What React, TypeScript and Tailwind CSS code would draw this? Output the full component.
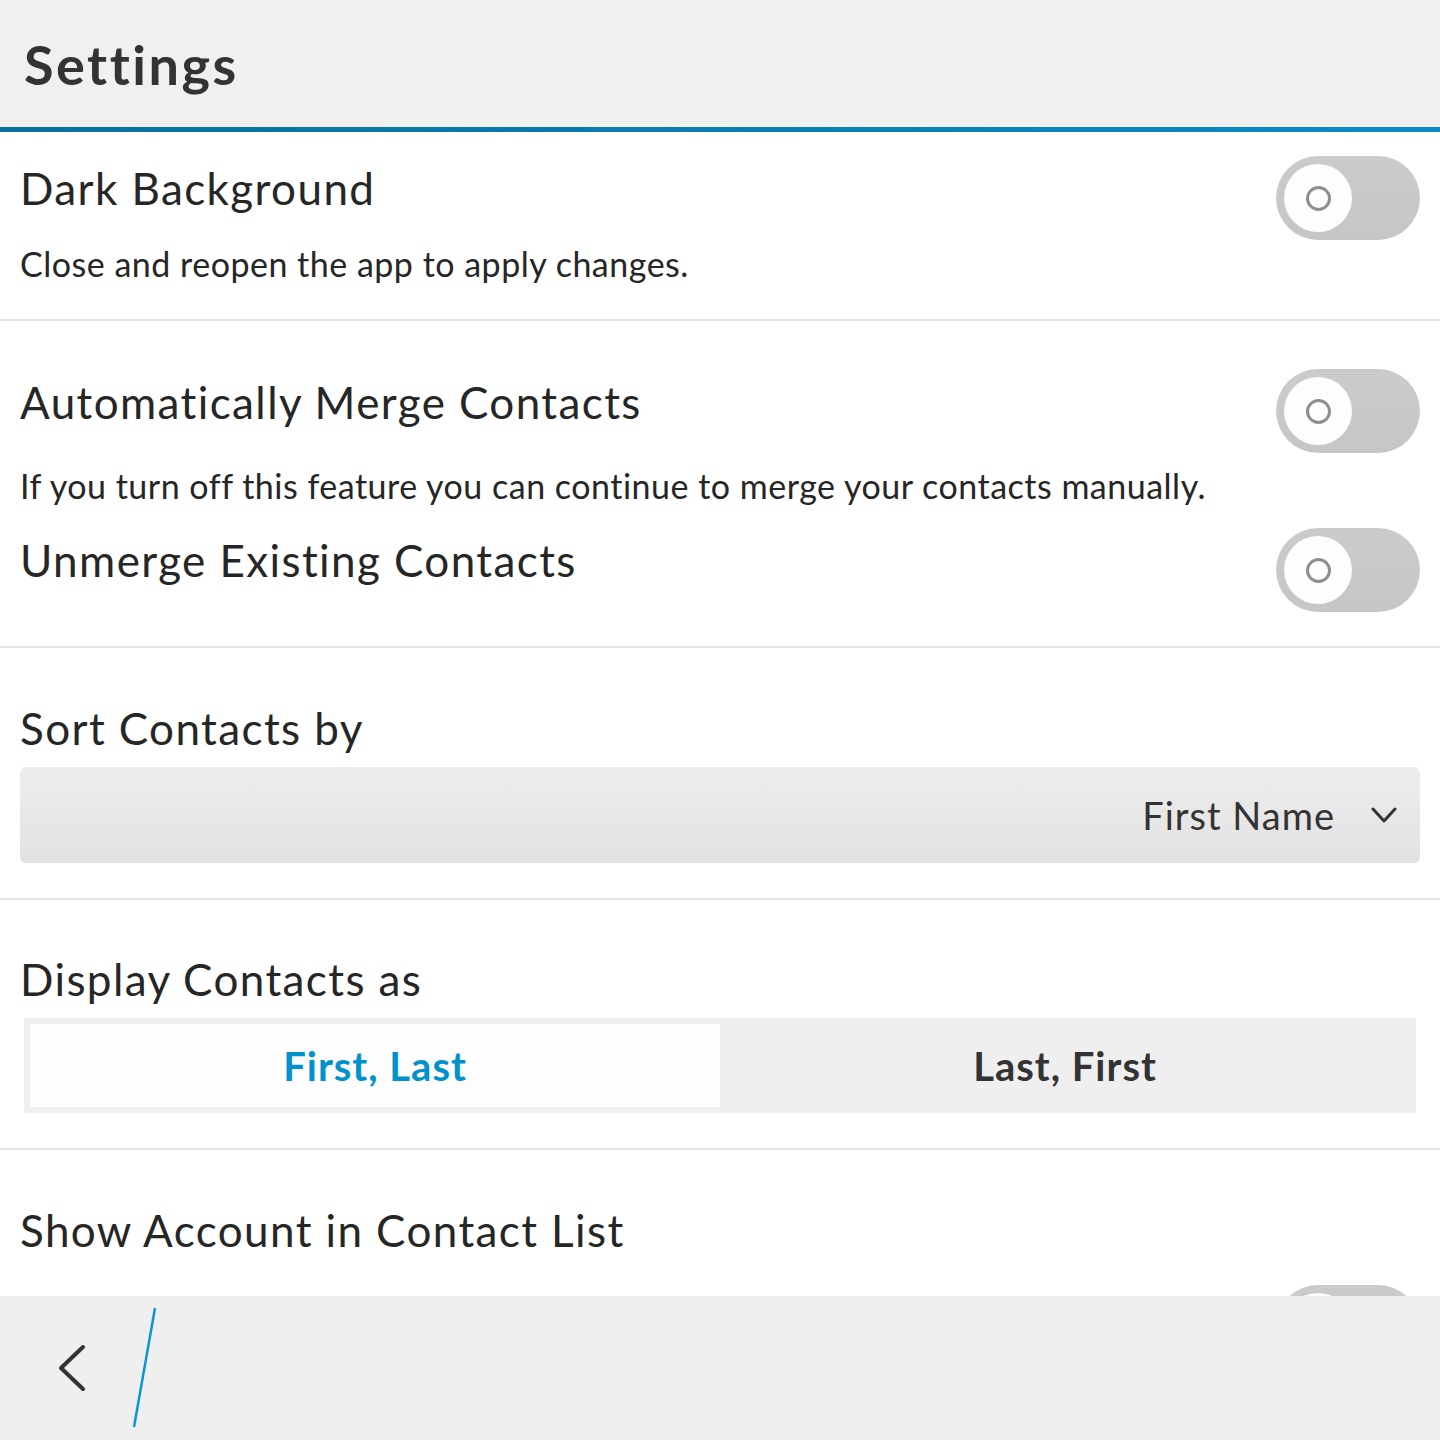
import React from 'react';

const Toggle = () => (
  <div className="w-[144px] h-[84px] shrink-0 rounded-full bg-gradient-to-b from-[#cbcbcb] to-[#c6c6c6] p-[8px] flex">
    <div className="w-[68px] h-[68px] rounded-full bg-[#fdfdfd] flex items-center justify-center">
      <div className="w-[25px] h-[25px] rounded-full border-[3px] border-[#8e8e8e]" />
    </div>
  </div>
);

const Title = ({ children, className = '' }: { children: React.ReactNode; className?: string }) => (
  <div className={`text-[44px] leading-[52px] tracking-[1.4px] text-[#262626] ${className}`}>{children}</div>
);

const Hint = ({ children, className = '' }: { children: React.ReactNode; className?: string }) => (
  <div className={`text-[34px] leading-[40px] tracking-[0.5px] text-[#262626] ${className}`}>{children}</div>
);

export default function App() {
  return (
    <div className="h-[1440px] flex flex-col bg-white overflow-hidden font-['Lato','Noto_Sans',sans-serif]">
      <header className="h-[127px] shrink-0 bg-[#f0f0f0] px-[24px] pt-[33px]">
        <h1 className="text-[54px] leading-[64px] font-bold tracking-[2.5px] text-[#333333]">Settings</h1>
      </header>
      <div className="h-[5px] shrink-0 bg-gradient-to-r from-[#07709d] to-[#0a8bc8]" />

      <main className="flex-1 overflow-hidden">
        {/* Dark background */}
        <section className="px-[20px] pt-[24px] pb-[35px] border-b-2 border-[#e4e4e4]">
          <div className="flex items-start justify-between">
            <div>
              <Title className="mt-[6px]">Dark Background</Title>
              <Hint className="mt-[30px]">Close and reopen the app to apply changes.</Hint>
            </div>
            <Toggle />
          </div>
        </section>

        {/* Merge */}
        <section className="px-[20px] pt-[48px] pb-[34px] border-b-2 border-[#e4e4e4]">
          <div className="flex items-start justify-between">
            <Title className="mt-[7px]">Automatically Merge Contacts</Title>
            <Toggle />
          </div>
          <Hint className="mt-[13px]">
            If you turn off this feature you can continue to merge your contacts manually.
          </Hint>
          <div className="mt-[22px] flex items-start justify-between">
            <Title className="mt-[6px]">Unmerge Existing Contacts</Title>
            <Toggle />
          </div>
        </section>

        {/* Sort */}
        <section className="px-[20px] pt-[54px] pb-[35px] border-b-2 border-[#e4e4e4]">
          <Title>Sort Contacts by</Title>
          <button className="mt-[13px] w-full h-[96px] rounded-[6px] bg-gradient-to-b from-[#ededed] to-[#e2e2e2] flex items-center justify-end pr-[23px]">
            <span className="text-[38px] tracking-[1px] text-[#333333]">First Name</span>
            <svg className="ml-[36px]" width="26" height="19" viewBox="0 0 26 19" fill="none">
              <polyline points="2,3 13,15 24,3" stroke="#333333" strokeWidth="3" strokeLinecap="round" strokeLinejoin="round" />
            </svg>
          </button>
        </section>

        {/* Display */}
        <section className="px-[20px] pt-[53px] pb-[35px] border-b-2 border-[#e4e4e4]">
          <Title>Display Contacts as</Title>
          <div className="mt-[13px] mx-[4px] h-[95px] bg-[#efefef] p-[6px] flex">
            <div className="flex-1 bg-[#fdfdfd] flex items-center justify-center text-[40px] font-bold tracking-[1px] text-[#0092cc]">
              First, Last
            </div>
            <div className="flex-1 flex items-center justify-center text-[40px] font-bold tracking-[1px] text-[#333333]">
              Last, First
            </div>
          </div>
        </section>

        {/* Accounts */}
        <section className="px-[20px] pt-[54px]">
          <Title>Show Account in Contact List</Title>
          <div className="mt-[29px] flex items-start justify-between">
            <div className="ml-[92px] mt-[2px] text-[38px] leading-[44px] text-[#777777]">BBM Groups</div>
            <Toggle />
          </div>
        </section>
      </main>

      <footer className="h-[144px] shrink-0 bg-[#efefef] flex items-start">
        <svg className="ml-[56px] mt-[48px]" width="32" height="48" viewBox="0 0 32 48" fill="none">
          <polyline points="27,3 5,24 27,45" stroke="#333333" strokeWidth="4" strokeLinecap="round" strokeLinejoin="round" />
        </svg>
        <svg className="ml-[44px] mt-[10px]" width="26" height="124" viewBox="0 0 26 124" fill="none">
          <line x1="23" y1="2" x2="2" y2="121" stroke="#0a96d2" strokeWidth="2.5" />
        </svg>
      </footer>
    </div>
  );
}
